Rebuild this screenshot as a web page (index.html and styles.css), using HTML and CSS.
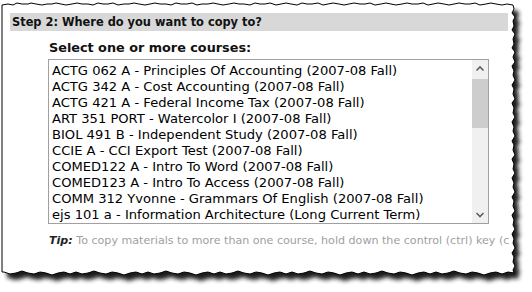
FILE: index.html
```html
<!DOCTYPE html>
<html>
<head>
<meta charset="utf-8">
<link rel="stylesheet" href="styles.css">
</head>
<body>
<div class="frame">
  <div class="sheet">
    <div class="step-bar">Step 2: Where do you want to copy to?</div>
    <div class="section">
      <div class="label">Select one or more courses:</div>
      <div class="listbox">
        <div class="options">
          <div class="opt">ACTG 062 A - Principles Of Accounting (2007-08 Fall)</div>
          <div class="opt">ACTG 342 A - Cost Accounting (2007-08 Fall)</div>
          <div class="opt">ACTG 421 A - Federal Income Tax (2007-08 Fall)</div>
          <div class="opt">ART 351 PORT - Watercolor I (2007-08 Fall)</div>
          <div class="opt">BIOL 491 B - Independent Study (2007-08 Fall)</div>
          <div class="opt">CCIE A - CCI Export Test (2007-08 Fall)</div>
          <div class="opt">COMED122 A - Intro To Word (2007-08 Fall)</div>
          <div class="opt">COMED123 A - Intro To Access (2007-08 Fall)</div>
          <div class="opt">COMM 312 Yvonne - Grammars Of English (2007-08 Fall)</div>
          <div class="opt">ejs 101 a - Information Architecture (Long Current Term)</div>
        </div>
        <div class="scrollbar">
          <div class="sb-btn"><svg width="16" height="17" viewBox="0 0 16 17"><path d="M4.5 10.5 L8 7 L11.5 10.5" fill="none" stroke="#606060" stroke-width="1.6"/></svg></div>
          <div class="sb-track"><div class="sb-thumb"></div></div>
          <div class="sb-btn"><svg width="16" height="17" viewBox="0 0 16 17"><path d="M4.5 7 L8 10.5 L11.5 7" fill="none" stroke="#606060" stroke-width="1.6"/></svg></div>
        </div>
      </div>
      <div class="tip"><b>Tip:</b> To copy materials to more than one course, hold down the control (ctrl) key (c</div>
    </div>
  </div>
  <svg class="edges" width="532" height="292" viewBox="0 0 532 292">
    <defs>
      <path id="edge" d="M2,5 L8,4 L13,5 L17,3 L22,4 L28,4 L31,3 L36,4 L42,5 L47,4 L52,4 L56,3 L61,4 L66,5 L72,4 L77,3 L82,4 L88,4 L93,5 L98,3 L103,4 L108,4 L113,3 L118,5 L124,4 L129,4 L134,3 L139,4 L145,5 L150,4 L155,3 L160,4 L166,4 L171,5 L176,3 L181,4 L187,4 L192,3 L197,5 L202,4 L208,4 L213,3 L218,4 L223,5 L229,4 L234,3 L239,4 L244,4 L250,5 L255,3 L260,4 L265,4 L270,3 L276,5 L281,4 L286,3 L291,4 L297,5 L302,3 L307,4 L312,4 L318,3 L323,5 L328,4 L333,3 L339,4 L344,5 L349,4 L354,3 L360,4 L365,4 L370,3 L375,5 L381,4 L386,3 L391,4 L396,5 L402,4 L407,3 L412,4 L418,4 L423,3 L428,5 L433,4 L438,3 L444,4 L449,5 L454,4 L459,3 L465,4 L470,4 L475,3 L480,5 L486,4 L491,3 L496,4 L502,5 L507,4 L513,5 L514,9 L512,13 L515,17 L513,21 L514,26 L512,30 L515,34 L513,39 L514,44 L512,48 L515,52 L513,57 L515,62 L512,66 L514,71 L513,75 L515,80 L512,85 L514,89 L513,94 L515,99 L512,103 L514,108 L513,113 L515,117 L512,122 L514,127 L513,131 L515,136 L512,141 L514,145 L513,150 L515,155 L512,159 L514,164 L513,169 L515,173 L512,178 L514,183 L513,187 L515,192 L512,197 L514,201 L513,206 L515,211 L512,215 L514,220 L513,225 L515,229 L512,234 L514,239 L513,243 L515,248 L512,253 L514,257 L513,262 L515,266 L513,270 L514,273 L508,272 L502,274 L496,272 L490,273 L484,275 L478,273 L472,272 L466,274 L460,273 L454,271 L448,273 L442,274 L436,272 L430,274 L424,272 L418,273 L412,275 L406,273 L400,272 L394,274 L388,273 L382,271 L376,273 L370,274 L364,272 L358,274 L352,272 L346,273 L340,275 L334,273 L328,272 L322,274 L316,273 L310,271 L304,273 L298,274 L292,272 L286,274 L280,272 L274,273 L268,275 L262,273 L256,272 L250,274 L244,273 L238,271 L232,273 L226,274 L220,272 L214,274 L208,272 L202,273 L196,275 L190,273 L184,272 L178,274 L172,273 L166,271 L160,273 L154,274 L148,272 L142,274 L136,272 L130,273 L124,275 L118,273 L112,272 L106,274 L100,273 L94,271 L88,273 L82,274 L76,272 L70,274 L64,272 L58,273 L52,275 L46,273 L40,272 L34,274 L28,273 L22,271 L16,273 L10,274 L4,272 L2,272 Z"/>
      <clipPath id="outside">
        <path clip-rule="evenodd" d="M0,0 H532 V292 H0 Z M2,5 L8,4 L13,5 L17,3 L22,4 L28,4 L31,3 L36,4 L42,5 L47,4 L52,4 L56,3 L61,4 L66,5 L72,4 L77,3 L82,4 L88,4 L93,5 L98,3 L103,4 L108,4 L113,3 L118,5 L124,4 L129,4 L134,3 L139,4 L145,5 L150,4 L155,3 L160,4 L166,4 L171,5 L176,3 L181,4 L187,4 L192,3 L197,5 L202,4 L208,4 L213,3 L218,4 L223,5 L229,4 L234,3 L239,4 L244,4 L250,5 L255,3 L260,4 L265,4 L270,3 L276,5 L281,4 L286,3 L291,4 L297,5 L302,3 L307,4 L312,4 L318,3 L323,5 L328,4 L333,3 L339,4 L344,5 L349,4 L354,3 L360,4 L365,4 L370,3 L375,5 L381,4 L386,3 L391,4 L396,5 L402,4 L407,3 L412,4 L418,4 L423,3 L428,5 L433,4 L438,3 L444,4 L449,5 L454,4 L459,3 L465,4 L470,4 L475,3 L480,5 L486,4 L491,3 L496,4 L502,5 L507,4 L513,5 L514,9 L512,13 L515,17 L513,21 L514,26 L512,30 L515,34 L513,39 L514,44 L512,48 L515,52 L513,57 L515,62 L512,66 L514,71 L513,75 L515,80 L512,85 L514,89 L513,94 L515,99 L512,103 L514,108 L513,113 L515,117 L512,122 L514,127 L513,131 L515,136 L512,141 L514,145 L513,150 L515,155 L512,159 L514,164 L513,169 L515,173 L512,178 L514,183 L513,187 L515,192 L512,197 L514,201 L513,206 L515,211 L512,215 L514,220 L513,225 L515,229 L512,234 L514,239 L513,243 L515,248 L512,253 L514,257 L513,262 L515,266 L513,270 L514,273 L508,272 L502,274 L496,272 L490,273 L484,275 L478,273 L472,272 L466,274 L460,273 L454,271 L448,273 L442,274 L436,272 L430,274 L424,272 L418,273 L412,275 L406,273 L400,272 L394,274 L388,273 L382,271 L376,273 L370,274 L364,272 L358,274 L352,272 L346,273 L340,275 L334,273 L328,272 L322,274 L316,273 L310,271 L304,273 L298,274 L292,272 L286,274 L280,272 L274,273 L268,275 L262,273 L256,272 L250,274 L244,273 L238,271 L232,273 L226,274 L220,272 L214,274 L208,272 L202,273 L196,275 L190,273 L184,272 L178,274 L172,273 L166,271 L160,273 L154,274 L148,272 L142,274 L136,272 L130,273 L124,275 L118,273 L112,272 L106,274 L100,273 L94,271 L88,273 L82,274 L76,272 L70,274 L64,272 L58,273 L52,275 L46,273 L40,272 L34,274 L28,273 L22,271 L16,273 L10,274 L4,272 L2,272 Z"/>
      </clipPath>
      <filter id="blur" x="-5%" y="-5%" width="110%" height="110%">
        <feGaussianBlur stdDeviation="2.3"/>
      </filter>
    </defs>
    <g clip-path="url(#outside)">
      <rect x="0" y="0" width="532" height="292" fill="#ffffff"/>
      <use href="#edge" transform="translate(5,6)" fill="#1e1e1e" filter="url(#blur)"/>
    </g>
    <use href="#edge" fill="none" stroke="#000000" stroke-width="1"/>
  </svg>
</div>
</body>
</html>
```

FILE: styles.css
```css
html, body {
  margin: 0;
  padding: 0;
  background: #ffffff;
}

.frame {
  position: relative;
  width: 532px;
  height: 292px;
  overflow: hidden;
}

.sheet {
  width: 532px;
  height: 292px;
  padding: 13px 0 0 10px;
  box-sizing: border-box;
  font-family: "DejaVu Sans", Verdana, sans-serif;
  color: #000;
}

.step-bar {
  width: 498px;
  height: 18px;
  background: #d8d8d8;
  color: #111;
  font-weight: bold;
  font-size: 11.4px;
  line-height: 18px;
  padding-left: 2px;
  box-sizing: border-box;
  white-space: nowrap;
}

.section {
  padding-left: 38px;
}

.label {
  font-weight: bold;
  font-size: 12.8px;
  line-height: 16px;
  margin-top: 9px;
  padding-left: 1px;
  color: #111;
  white-space: nowrap;
}

.listbox {
  display: flex;
  width: 441px;
  height: 165px;
  margin-top: 3px;
  border: 1px solid #a0a0a0;
  box-sizing: border-box;
  background: #fff;
}

.options {
  flex: 1;
  padding: 3px 0 0 3px;
  overflow: hidden;
}

.opt {
  font-size: 13.1px;
  line-height: 16px;
  height: 16px;
  white-space: nowrap;
  color: #000;
}

.scrollbar {
  width: 16px;
  display: flex;
  flex-direction: column;
  background: #f0f0f0;
}

.sb-btn {
  height: 17px;
  display: flex;
}

.sb-track {
  flex: 1;
  padding-top: 2px;
}

.sb-thumb {
  height: 49px;
  background: #cdcdcd;
}

.tip {
  font-size: 11.1px;
  line-height: 14px;
  margin-top: 10px;
  padding-left: 1px;
  color: #a0a0a0;
  white-space: nowrap;
}

.tip b {
  font-style: italic;
  color: #222;
}

.edges {
  position: absolute;
  left: 0;
  top: 0;
  pointer-events: none;
}
```
